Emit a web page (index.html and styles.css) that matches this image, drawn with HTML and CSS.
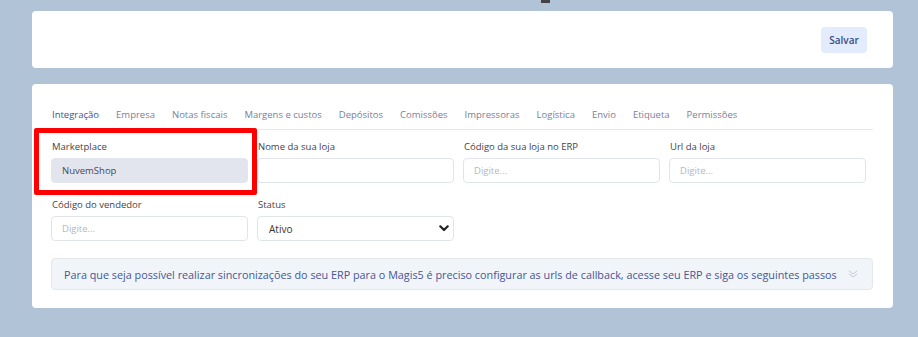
FILE: index.html
```html
<!DOCTYPE html>
<html lang="pt-BR">
<head>
    <meta charset="UTF-8">
    <meta name="viewport" content="width=device-width, initial-scale=1.0">
    <link rel="stylesheet" href="styles.css">
</head>
<body>
    <div class="top-mark"></div>
    <div class="page">
        <div class="card header-card">
            <button class="save-btn">Salvar</button>
        </div>

        <div class="card main-card">
            <nav class="tabs">
                <a class="tab active">Integração</a>
                <a class="tab">Empresa</a>
                <a class="tab">Notas fiscais</a>
                <a class="tab">Margens e custos</a>
                <a class="tab">Depósitos</a>
                <a class="tab">Comissões</a>
                <a class="tab">Impressoras</a>
                <a class="tab">Logística</a>
                <a class="tab">Envio</a>
                <a class="tab">Etiqueta</a>
                <a class="tab">Permissões</a>
            </nav>

            <div class="form-grid">
                <div class="field highlight">
                    <label>Marketplace</label>
                    <input class="input disabled" value="NuvemShop" disabled>
                </div>
                <div class="field">
                    <label>Nome da sua loja</label>
                    <input class="input" value="">
                </div>
                <div class="field">
                    <label>Código da sua loja no ERP</label>
                    <input class="input" placeholder="Digite...">
                </div>
                <div class="field">
                    <label>Url da loja</label>
                    <input class="input" placeholder="Digite...">
                </div>
                <div class="field">
                    <label>Código do vendedor</label>
                    <input class="input" placeholder="Digite...">
                </div>
                <div class="field">
                    <label>Status</label>
                    <div class="select">
                        <span>Ativo</span>
                        <svg width="10" height="7" viewBox="0 0 10 7"><path d="M1.3 1.3 L5 5 L8.7 1.3" fill="none" stroke="#222" stroke-width="2.2" stroke-linecap="round" stroke-linejoin="round"/></svg>
                    </div>
                </div>
            </div>

            <div class="callout">
                <span>Para que seja possível realizar sincronizações do seu ERP para o Magis5 é preciso configurar as urls de callback, acesse seu ERP e siga os seguintes passos</span>
                <svg width="10" height="8" viewBox="0 0 10 8"><path d="M1 1 L5 4 L9 1 M1 4 L5 7 L9 4" fill="none" stroke="#c4c9d6" stroke-width="1"/></svg>
            </div>
        </div>
    </div>
</body>
</html>
```

FILE: styles.css
```css
body {
  margin: 0;
  background-color: #b0c3d7;
  font-family: "Open Sans", "Noto Sans", sans-serif;
  height: 337px;
  overflow: hidden;
}
.top-mark {
  position: absolute;
  top: 0;
  left: 541px;
  width: 9px;
  height: 3px;
  background-color: #444;
}
.page {
  padding: 11px 25px 0 32px;
}
.card {
  background-color: #fff;
  border-radius: 4px;
}
.header-card {
  height: 57px;
  display: flex;
  align-items: center;
  justify-content: flex-end;
  padding-right: 26px;
  box-sizing: border-box;
}
.save-btn {
  background-color: #e3ecfc;
  border: none;
  border-radius: 4px;
  width: 46px;
  height: 26px;
  font-family: inherit;
  font-size: 10px;
  font-weight: 600;
  color: #3b4a86;
  padding: 0;
}
.main-card {
  margin-top: 16px;
  padding: 21px 20px 18px 19px;
}
.tabs {
  display: flex;
  gap: 17px;
  padding-left: 1px;
  border-bottom: 1px solid #e6e8ef;
}
.tab {
  font-size: 9.5px;
  color: #7b8098;
  padding: 3px 0 7px;
  border-bottom: 2px solid transparent;
  margin-bottom: -1px;
}
.tab.active {
  color: #44528a;
  border-bottom-color: #44528a;
}
.form-grid {
  display: grid;
  grid-template-columns: repeat(4, 197px);
  column-gap: 9px;
  row-gap: 16px;
  margin-top: 11px;
}
.field {
  position: relative;
  display: flex;
  flex-direction: column;
}
.field label {
  font-size: 9.5px;
  color: #444;
  line-height: 12px;
  margin-bottom: 5px;
  padding-left: 1px;
}
.input {
  height: 25px;
  box-sizing: border-box;
  border: 1px solid #e2e4ec;
  border-radius: 4px;
  padding: 0 10px;
  font-family: inherit;
  font-size: 9.5px;
  color: #444;
  background-color: #fff;
  outline: none;
}
.input::placeholder {
  color: #b4b7c4;
}
.input.disabled {
  background-color: #e2e5ee;
  border-color: #e2e5ee;
  color: #454a58;
}
.highlight::after {
  content: "";
  position: absolute;
  left: -17px;
  top: -13px;
  width: 213px;
  height: 57px;
  border: 5px solid #ff0000;
  border-radius: 2px;
}
.select {
  height: 25px;
  box-sizing: border-box;
  border: 1px solid #e2e4ec;
  border-radius: 4px;
  padding: 0 4px 0 11px;
  display: flex;
  align-items: center;
  justify-content: space-between;
  font-size: 10px;
  color: #333;
}
.callout {
  margin-top: 17px;
  height: 32px;
  box-sizing: border-box;
  background-color: #f1f4f8;
  border: 1px solid #e4e8ee;
  border-radius: 4px;
  display: flex;
  align-items: center;
  justify-content: space-between;
  padding: 0 14px 0 12px;
  font-size: 10.8px;
  color: #44579a;
}
```
